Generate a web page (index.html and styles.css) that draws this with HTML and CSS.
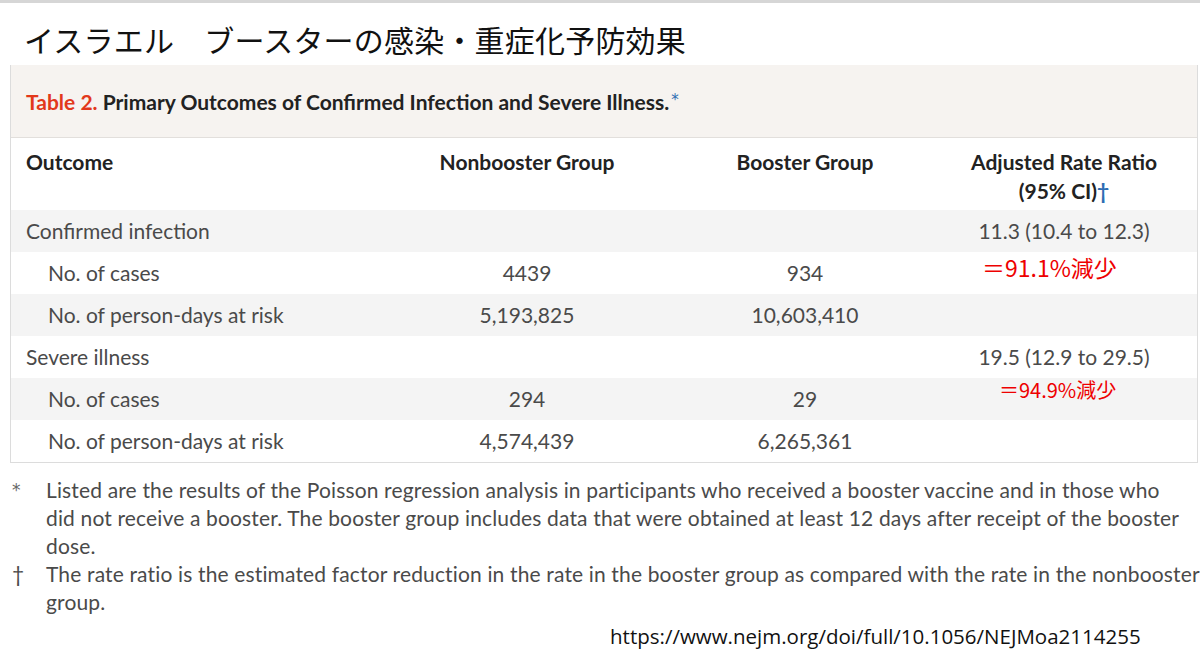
FILE: index.html
```html
<!DOCTYPE html>
<html lang="ja">
<head>
<meta charset="utf-8">
<title>イスラエル ブースターの感染・重症化予防効果</title>
<link rel="stylesheet" href="styles.css">
</head>
<body>
<div class="topbar"></div>
<h1 class="title">イスラエル　ブースターの感染・重症化予防効果</h1>
<div class="table-box">
  <div class="caption"><span class="cap-text"><span class="cap-num">Table 2.</span> Primary Outcomes of Confirmed Infection and Severe Illness.<sup class="mark">*</sup></span></div>
  <table class="data">
    <colgroup>
      <col class="c1"><col class="c2"><col class="c3"><col class="c4">
    </colgroup>
    <thead>
      <tr>
        <th class="left">Outcome</th>
        <th>Nonbooster Group</th>
        <th>Booster Group</th>
        <th class="last">Adjusted Rate Ratio<br>(95% CI)<span class="dagger">†</span></th>
      </tr>
    </thead>
    <tbody>
      <tr class="shade">
        <td class="left">Confirmed infection</td><td></td><td></td><td class="last">11.3 (10.4 to 12.3)</td>
      </tr>
      <tr>
        <td class="left indent">No. of cases</td><td>4439</td><td>934</td><td class="note-cell"><span class="note note-a">＝91.1%減少</span></td>
      </tr>
      <tr class="shade">
        <td class="left indent">No. of person-days at risk</td><td>5,193,825</td><td>10,603,410</td><td class="last"></td>
      </tr>
      <tr>
        <td class="left">Severe illness</td><td></td><td></td><td class="last">19.5 (12.9 to 29.5)</td>
      </tr>
      <tr class="shade">
        <td class="left indent">No. of cases</td><td>294</td><td>29</td><td class="note-cell"><span class="note note-b">＝94.9%減少</span></td>
      </tr>
      <tr>
        <td class="left indent">No. of person-days at risk</td><td>4,574,439</td><td>6,265,361</td><td class="last"></td>
      </tr>
    </tbody>
  </table>
</div>
<div class="footnotes">
  <div class="fn"><span class="sym sym-star">*</span><p class="fn-text fn-a">Listed are the results of the Poisson regression analysis in participants who received a booster vaccine and in those who did not receive a booster. The booster group includes data that were obtained at least 12 days after receipt of the booster dose.</p></div>
  <div class="fn"><span class="sym">†</span><p class="fn-text fn-b">The rate ratio is the estimated factor reduction in the rate in the booster group as compared with the rate in the nonbooster group.</p></div>
</div>
<div class="source">https://www.nejm.org/doi/full/10.1056/NEJMoa2114255</div>
</body>
</html>
```

FILE: styles.css
```css
html, body {
  margin: 0;
  padding: 0;
  background: #ffffff;
}
body {
  width: 1200px;
  height: 671px;
  overflow: hidden;
  font-family: "Lato", "Noto Sans", sans-serif;
  color: #222;
}
.topbar {
  height: 3px;
  background: #d6d6d6;
}
.title {
  margin: 0;
  padding: 15px 0 0 24px;
  height: 47px;
  font-family: "Noto Sans CJK JP", sans-serif;
  font-weight: 400;
  font-size: 30px;
  line-height: 42px;
  color: #111;
  letter-spacing: 0.2px;
}
.table-box {
  margin-left: 10px;
  width: 1186px;
  border: 1px solid #dcdcdc;
  border-top: none;
}
.caption {
  height: 72px;
  background: #f6f3f0;
  border-bottom: 1px solid #e2dfdc;
  display: flex;
  align-items: center;
  padding-left: 15px;
  font-size: 21px;
  font-weight: 700;
  color: #222;
}
.cap-num {
  color: #e2381b;
}
.mark {
  font-family: "DejaVu Sans", sans-serif;
  color: #2e6db3;
  font-size: 15px;
  font-weight: 400;
  vertical-align: 5px;
  line-height: 0;
  margin-left: 2px;
}
.data {
  width: 100%;
  border-collapse: collapse;
  font-size: 21px;
}
.c1 { width: 379px; }
.c2 { width: 274px; }
.c3 { width: 282px; }
.c4 { width: 251px; }
.data th {
  font-weight: 700;
  color: #222;
  text-align: center;
  vertical-align: top;
  padding: 9px 0 0 0;
  height: 63px;
  line-height: 29px;
}
.data td {
  height: 42px;
  padding: 0;
  text-align: center;
  color: #4a4a4a;
  line-height: 42px;
}
.data .left {
  text-align: left;
  padding-left: 15px;
}
.data .indent {
  padding-left: 37px;
}
.data .last {
  padding-right: 15px;
}
.shade td {
  background: #f4f4f4;
}
.dagger {
  color: #2e6db3;
}
.data .note-cell {
  vertical-align: top;
  text-align: left;
}
.note {
  display: block;
  font-family: "Noto Sans CJK JP", sans-serif;
  color: #ee0000;
}
.note-a {
  font-size: 23px;
  line-height: 26px;
  margin-top: 2px;
  padding-left: 36px;
}
.note-b {
  font-size: 20px;
  line-height: 24px;
  margin-top: 0;
  padding-left: 53px;
}
.footnotes {
  margin-top: 13px;
  font-size: 21px;
  line-height: 28px;
  color: #4a4a4a;
  letter-spacing: 0.15px;
}
.fn {
  display: flex;
}
.sym {
  width: 34px;
  padding-left: 12px;
  flex: none;
}
.sym-star {
  font-family: "DejaVu Sans", sans-serif;
  font-size: 17px;
  color: #666;
}
.fn-text {
  margin: 0;
  flex: none;
}
.fn-a {
  width: 1140px;
}
.fn-b {
  width: 1160px;
}
.source {
  margin-top: 6px;
  padding-left: 610px;
  font-family: "Open Sans", sans-serif;
  font-size: 20.5px;
  line-height: 28px;
  color: #111;
}
```
